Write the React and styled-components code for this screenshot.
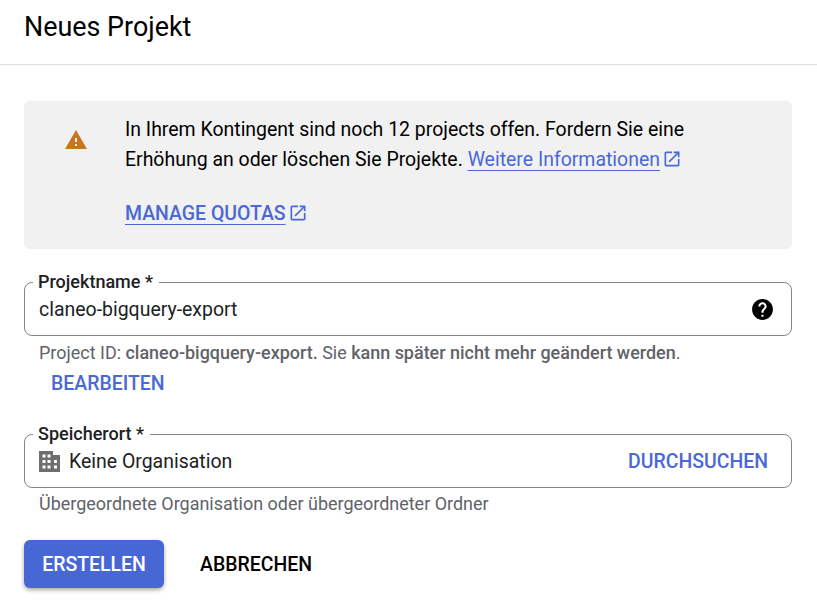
import React from 'react';
import styled, { createGlobalStyle } from 'styled-components';
import { MdWarning, MdHelp, MdOpenInNew } from 'react-icons/md';

const GlobalStyle = createGlobalStyle`
  html, body {
    margin: 0;
    padding: 0;
    background: #fff;
    overflow: hidden;
  }
  body {
    font-family: Roboto, "Liberation Sans", sans-serif;
    color: #000;
  }
`;

const Page = styled.div`
  width: 817px;
  height: 613px;
  box-sizing: border-box;
`;

const Header = styled.header`
  height: 65px;
  box-sizing: border-box;
  border-bottom: 1px solid #e0e0e0;
  padding: 11px 24px 0;

  h1 {
    margin: 0;
    font-size: 26.9px;
    line-height: 33px;
    font-weight: 400;
  }
`;

const Content = styled.main`
  padding: 36px 25px 0 24px;
  display: flex;
  flex-direction: column;
`;

const Notice = styled.section`
  display: grid;
  grid-template-columns: 101px 1fr;
  height: 148px;
  box-sizing: border-box;
  padding-top: 14px;
  background: #f1f1f1;
  border-radius: 6px;
  font-size: 19.47px;
  line-height: 30px;
`;

const NoticeIcon = styled.div`
  display: flex;
  justify-content: center;
  padding: 13px 0 0 2px;
  color: #c9741f;
  font-size: 24px;
  line-height: 0;
`;

const NoticeBody = styled.div`
  width: 600px;

  p {
    margin: 0;
  }
`;

const ExternalLink = styled.span`
  color: #4a68d6;
  font-weight: ${(p) => (p.$strong ? 500 : 400)};
  white-space: nowrap;

  u {
    text-decoration: underline 1px #4a68d6;
    text-decoration-skip-ink: none;
    text-underline-offset: 4px;
  }

  svg {
    font-size: 20px;
    vertical-align: -3px;
    margin-left: 2px;
  }
`;

const QuotaRow = styled.div`
  margin-top: 24px;
`;

const Field = styled.div`
  position: relative;
  height: 54px;
  box-sizing: border-box;
  display: flex;
  align-items: center;
  justify-content: space-between;
  margin-top: ${(p) => p.$top}px;
  padding: 0 23px 0 14px;
  border: 1px solid #80868b;
  border-radius: 8px;
  font-size: 19.47px;
`;

const FieldLabel = styled.label`
  position: absolute;
  left: 8px;
  top: -11px;
  padding: 0 6px 0 5px;
  background: #fff;
  font-size: 18px;
  line-height: 20px;
  font-weight: 500;
  color: #202124;
`;

const FieldValue = styled.div`
  display: flex;
  align-items: center;
  gap: 9px;
  color: #202124;
`;

const OrgIcon = styled.svg`
  width: 21px;
  height: 21px;
  fill: #6e6e6e;
`;

const HelpIcon = styled(MdHelp)`
  font-size: 25px;
  color: #000;
  margin-right: -7px;
`;

const Hint = styled.div`
  margin-top: ${(p) => p.$top}px;
  padding-left: 15px;
  font-size: 17.97px;
  line-height: 20px;
  color: #5f6368;

  b {
    font-weight: 500;
  }
`;

const TextAction = styled.button`
  background: none;
  border: none;
  padding: 2px 0 0;
  font: 500 19.47px/24px Roboto, "Liberation Sans", sans-serif;
  color: ${(p) => p.$color || '#4a68d6'};
  cursor: pointer;
`;

const EditRow = styled.div`
  margin-top: 7px;
  padding-left: 27px;
`;

const Actions = styled.div`
  display: flex;
  align-items: center;
  gap: 36px;
  margin-top: 26px;
`;

const PrimaryButton = styled.button`
  width: 140px;
  height: 48px;
  border: none;
  border-radius: 6px;
  background: #4767d4;
  color: #fff;
  font: 500 19.47px Roboto, "Liberation Sans", sans-serif;
  box-shadow: 0 2px 4px rgba(0, 0, 0, 0.35);
  cursor: pointer;
`;

export default function App() {
  return (
    <Page>
      <GlobalStyle />
      <Header>
        <h1>Neues Projekt</h1>
      </Header>
      <Content>
        <Notice>
          <NoticeIcon>
            <MdWarning />
          </NoticeIcon>
          <NoticeBody>
            <p>
              In Ihrem Kontingent sind noch 12 projects offen. Fordern Sie eine
              Erhöhung an oder löschen Sie Projekte.{' '}
              <ExternalLink>
                <u>Weitere Informationen</u>
                <MdOpenInNew />
              </ExternalLink>
            </p>
            <QuotaRow>
              <ExternalLink $strong>
                <u>MANAGE QUOTAS</u>
                <MdOpenInNew />
              </ExternalLink>
            </QuotaRow>
          </NoticeBody>
        </Notice>

        <Field $top={33}>
          <FieldLabel>Projektname *</FieldLabel>
          <FieldValue>claneo-bigquery-export</FieldValue>
          <HelpIcon />
        </Field>
        <Hint $top={7}>
          Project ID: <b>claneo-bigquery-export.</b> Sie <b>kann später nicht mehr geändert werden</b>.
        </Hint>
        <EditRow>
          <TextAction>BEARBEITEN</TextAction>
        </EditRow>

        <Field $top={38}>
          <FieldLabel>Speicherort *</FieldLabel>
          <FieldValue>
            <OrgIcon viewBox="0 0 21 21">
              <path
                fillRule="evenodd"
                d="M0 0h14v4h7v17H0zM3.5 3.5v3h3v-3zM8.5 3.5v3h3v-3zM3.5 9v3h3V9zM8.5 9v3h3V9zM3.5 14.5v3h3v-3zM8.5 14.5v3h3v-3zM15 9v3h3V9zM15 14.5v3h3v-3z"
              />
            </OrgIcon>
            Keine Organisation
          </FieldValue>
          <TextAction>DURCHSUCHEN</TextAction>
        </Field>
        <Hint $top={6}>Übergeordnete Organisation oder übergeordneter Ordner</Hint>

        <Actions>
          <PrimaryButton>ERSTELLEN</PrimaryButton>
          <TextAction $color="#000">ABBRECHEN</TextAction>
        </Actions>
      </Content>
    </Page>
  );
}
